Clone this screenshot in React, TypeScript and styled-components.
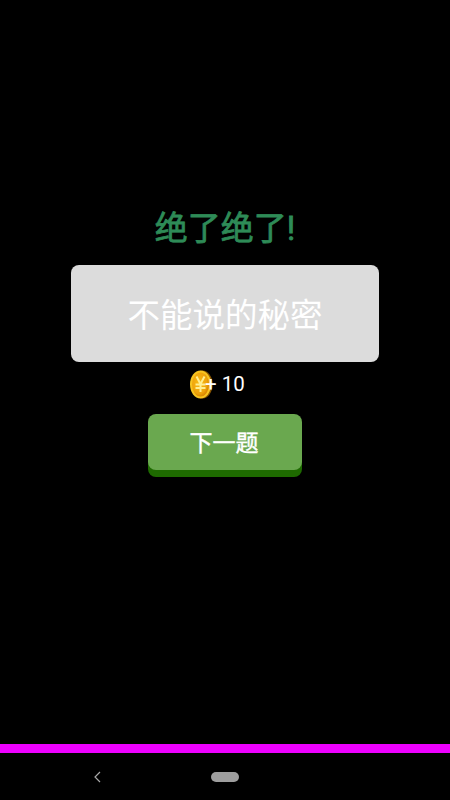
import React from "react";
import styled, { createGlobalStyle } from "styled-components";

const GlobalStyle = createGlobalStyle`
  html, body {
    margin: 0;
    padding: 0;
    background: #000;
  }
`;

const Screen = styled.div`
  width: 450px;
  height: 800px;
  background: #000;
  display: flex;
  flex-direction: column;
  overflow: hidden;
  font-family: Roboto, "Noto Sans CJK SC", sans-serif;
`;

const Content = styled.div`
  flex: 1;
  display: flex;
  flex-direction: column;
  align-items: center;
  padding-top: 208px;
  box-sizing: border-box;
`;

const Title = styled.div`
  height: 42px;
  line-height: 42px;
  font-size: 33px;
  color: #2e8b57;
  -webkit-text-stroke: 0.8px #2e8b57;
  margin-bottom: 15px;
`;

const AnswerCard = styled.div`
  width: 308px;
  height: 97px;
  box-sizing: border-box;
  background: #dcdcdc;
  border-radius: 8px;
  color: #fff;
  font-size: 32.5px;
  padding-bottom: 2px;
  display: flex;
  align-items: center;
  justify-content: center;
`;

const Reward = styled.div`
  height: 30px;
  margin-top: 7px;
  margin-right: 16px;
  display: flex;
  align-items: center;
  color: #fff;
  font-size: 20.5px;
`;

const RewardText = styled.span`
  margin-left: -8px;
  position: relative;
`;

const NextButton = styled.div`
  width: 154px;
  height: 56px;
  margin-top: 15px;
  background: #6aa84f;
  border-radius: 8px;
  box-shadow: 0 7px 0 #1e6b00;
  color: #fff;
  font-size: 23px;
  -webkit-text-stroke: 0.4px #fff;
  padding: 0 2px 2px 0;
  box-sizing: border-box;
  display: flex;
  align-items: center;
  justify-content: center;
`;

const ColorBar = styled.div`
  height: 9px;
  background: #ee00ff;
`;

const NavBar = styled.div`
  height: 47px;
  display: flex;
  align-items: center;
`;

const BackIcon = styled.svg`
  width: 8px;
  height: 12px;
  margin-left: 93px;
`;

const HomePill = styled.div`
  width: 28px;
  height: 10px;
  margin-left: 110px;
  border-radius: 5px;
  background: #9e9e9e;
`;

function Coin() {
  return (
    <svg width="24" height="29" viewBox="0 0 24 29">
      <defs>
        <radialGradient id="coinFace" cx="42%" cy="42%" r="60%">
          <stop offset="0%" stopColor="#f9bb14" />
          <stop offset="75%" stopColor="#eea30c" />
          <stop offset="100%" stopColor="#d88400" />
        </radialGradient>
      </defs>
      <ellipse cx="13.5" cy="14.5" rx="10" ry="14" fill="#8a5600" />
      <ellipse cx="11.5" cy="14.5" rx="10.5" ry="14" fill="#f7c420" />
      <ellipse cx="11.5" cy="14.5" rx="8.5" ry="12" fill="url(#coinFace)" />
      <path
        d="M7.5 6.5l4 7.5 4-7.5M6.5 14.5h10M6.5 18h10M11.5 14v8"
        fill="none"
        stroke="#ffee90"
        strokeWidth="2"
      />
    </svg>
  );
}

export default function App() {
  return (
    <Screen>
      <GlobalStyle />
      <Content>
        <Title>绝了绝了!</Title>
        <AnswerCard>不能说的秘密</AnswerCard>
        <Reward>
          <Coin />
          <RewardText>+ 10</RewardText>
        </Reward>
        <NextButton>下一题</NextButton>
      </Content>
      <ColorBar />
      <NavBar>
        <BackIcon viewBox="0 0 8 12">
          <path d="M7 1L2 6l5 5" fill="none" stroke="#a8a8a8" strokeWidth="1.2" />
        </BackIcon>
        <HomePill />
      </NavBar>
    </Screen>
  );
}
